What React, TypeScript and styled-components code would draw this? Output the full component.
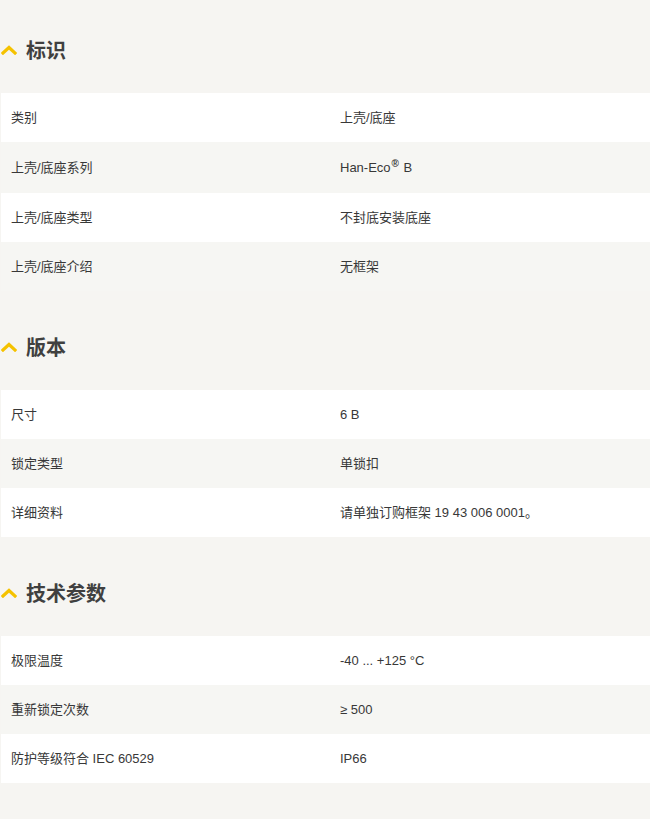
import React from "react";
import styled, { createGlobalStyle } from "styled-components";

const GlobalStyle = createGlobalStyle`
  html, body {
    margin: 0;
    padding: 0;
    background: #f6f5f2;
  }
  body {
    font-family: "Liberation Sans", "Noto Sans CJK SC", sans-serif;
    color: #333333;
  }
`;

const Page = styled.div`
  width: 650px;
  min-height: 819px;
  background: #f6f5f2;
  display: flex;
  flex-direction: column;
`;

const Section = styled.section`
  display: flex;
  flex-direction: column;
  margin-bottom: 6px;
`;

const Heading = styled.h2`
  margin: 0;
  height: 93px;
  box-sizing: border-box;
  padding: 38px 0 0 1px;
  display: flex;
  align-items: flex-start;
  gap: 9px;
  font-family: "Noto Sans CJK SC", sans-serif;
  font-size: 20px;
  line-height: 24px;
  font-weight: 700;
  color: #404040;
`;

const ChevronBox = styled.span`
  display: flex;
  align-items: center;
  height: 24px;
  width: 16px;
`;

const Table = styled.div`
  display: flex;
  flex-direction: column;
  padding-left: 1px;
`;

const Row = styled.div<{ $alt: boolean; $tall: boolean }>`
  display: grid;
  grid-template-columns: 329px 1fr;
  align-items: center;
  height: ${(p) => (p.$tall ? 51 : 49)}px;
  background: ${(p) => (p.$alt ? "#f6f6f3" : "#ffffff")};
  font-size: 13px;
  line-height: 18px;
  color: #383838;
`;

const Cell = styled.div`
  padding-left: 10px;
`;

const Sup = styled.span`
  position: relative;
  top: -5px;
  font-size: 10px;
  font-weight: 700;
  line-height: 0;
  margin: 0 1px 0 1px;
`;

const Chevron = () => (
  <ChevronBox>
    <svg width="16" height="10" viewBox="0 0 16 10">
      <polyline
        points="2,8 8,2.5 14,8"
        fill="none"
        stroke="#f5c200"
        strokeWidth="3.2"
        strokeLinecap="square"
      />
    </svg>
  </ChevronBox>
);

type Item = { label: React.ReactNode; value: React.ReactNode; tall?: boolean };

const sections: { title: string; rows: Item[] }[] = [
  {
    title: "标识",
    rows: [
      { label: "类别", value: "上壳/底座" },
      {
        label: "上壳/底座系列",
        value: (
          <>
            Han-Eco<Sup>®</Sup> B
          </>
        ),
        tall: true,
      },
      { label: "上壳/底座类型", value: "不封底安装底座" },
      { label: "上壳/底座介绍", value: "无框架" },
    ],
  },
  {
    title: "版本",
    rows: [
      { label: "尺寸", value: "6 B" },
      { label: "锁定类型", value: "单锁扣" },
      { label: "详细资料", value: "请单独订购框架 19 43 006 0001。" },
    ],
  },
  {
    title: "技术参数",
    rows: [
      { label: "极限温度", value: "-40 ... +125 °C" },
      { label: "重新锁定次数", value: "≥ 500" },
      { label: "防护等级符合 IEC 60529", value: "IP66" },
    ],
  },
];

export default function App() {
  return (
    <>
      <GlobalStyle />
      <Page>
        {sections.map((s) => (
          <Section key={s.title}>
            <Heading>
              <Chevron />
              {s.title}
            </Heading>
            <Table>
              {s.rows.map((r, i) => (
                <Row key={i} $alt={i % 2 === 1} $tall={!!r.tall}>
                  <Cell>{r.label}</Cell>
                  <Cell>{r.value}</Cell>
                </Row>
              ))}
            </Table>
          </Section>
        ))}
      </Page>
    </>
  );
}
